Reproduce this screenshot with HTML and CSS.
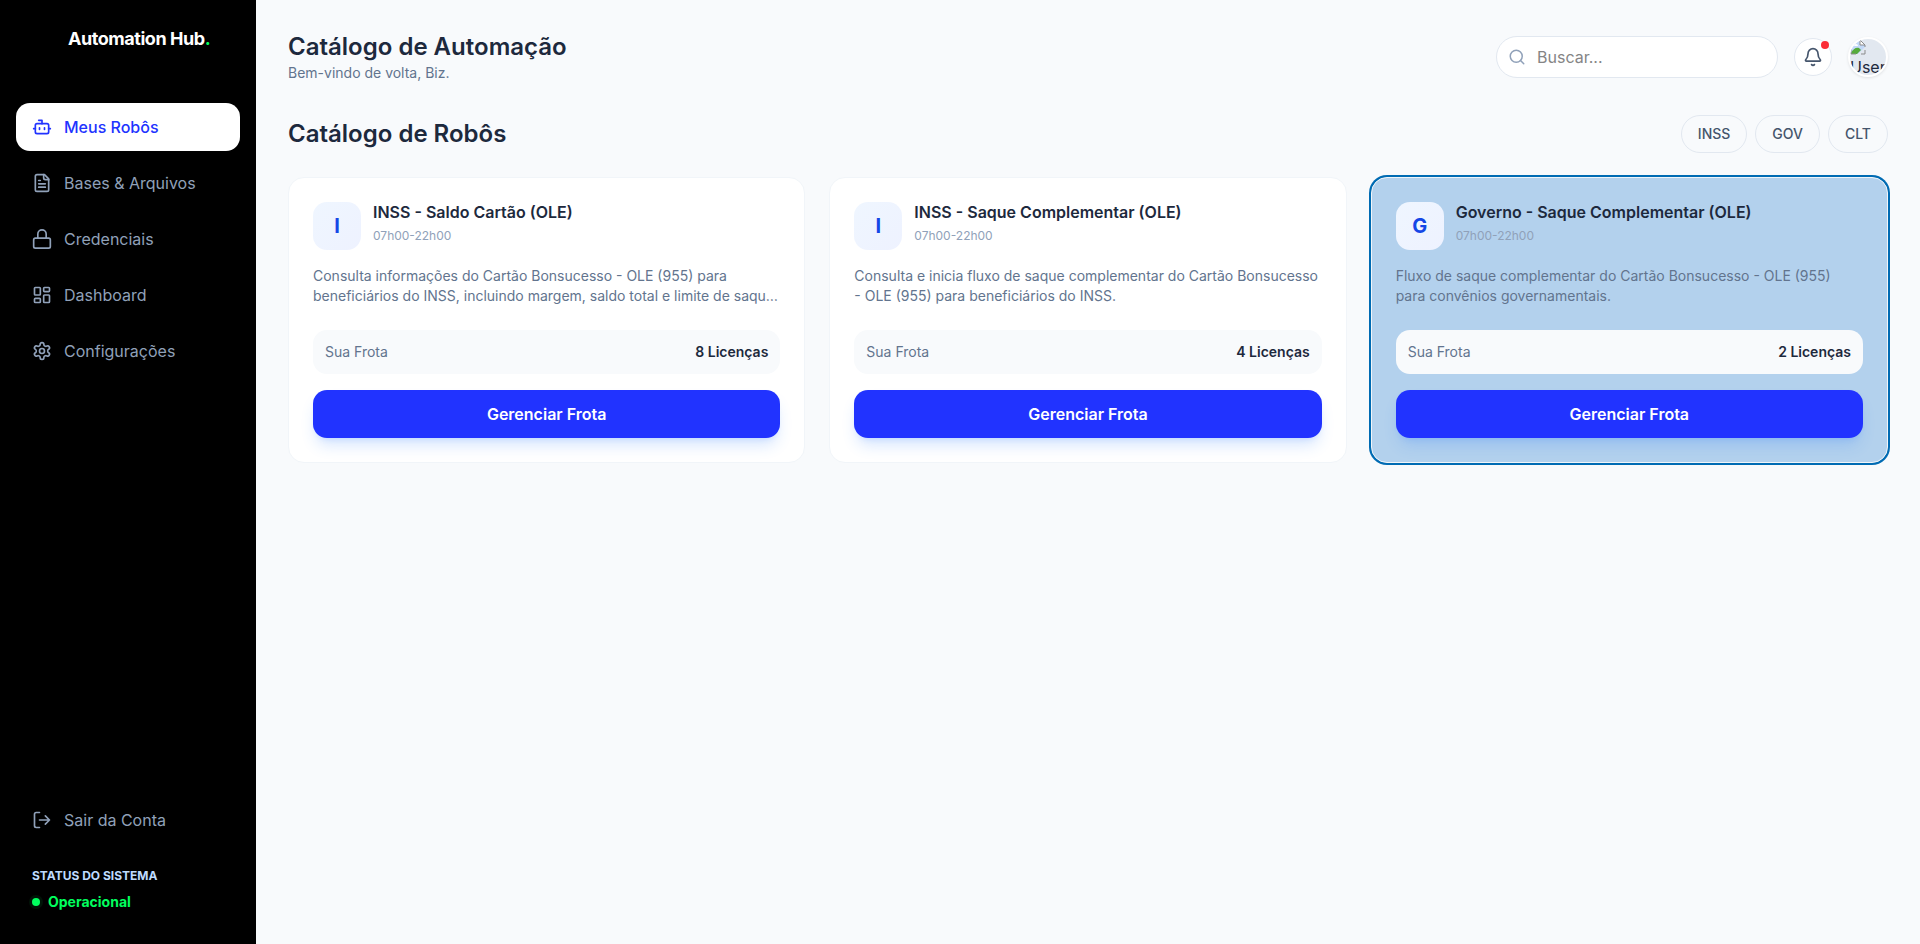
FILE: index.html
```html
<!DOCTYPE html>
<html lang="pt-BR">
<head>
  <meta charset="UTF-8" />
  <meta name="viewport" content="width=device-width, initial-scale=1" />
  <title>Automation Hub</title>
  <link rel="stylesheet" href="styles.css">
</head>
<body>

  <aside class="sidebar">
    <div class="logo">Automation Hub<span>.</span></div>

    <nav class="menu">
      <a href="#" class="menu-item active">
        <svg class="icon" viewBox="0 0 24 24"><path d="M12 8V4H8"/><rect width="16" height="12" x="4" y="8" rx="2"/><path d="M2 14h2M20 14h2M15 13v2M9 13v2"/></svg>
        Meus Robôs
      </a>
      <a href="#" class="menu-item">
        <svg class="icon" viewBox="0 0 24 24"><path d="M15 2H6a2 2 0 0 0-2 2v16a2 2 0 0 0 2 2h12a2 2 0 0 0 2-2V7Z"/><path d="M14 2v4a2 2 0 0 0 2 2h4M10 9H8M16 13H8M16 17H8"/></svg>
        Bases &amp; Arquivos
      </a>
      <a href="#" class="menu-item">
        <svg class="icon" viewBox="0 0 24 24"><rect width="20" height="12" x="2" y="11" rx="2"/><path d="M7 11V6a5 5 0 0 1 10 0v5"/></svg>
        Credenciais
      </a>
      <a href="#" class="menu-item">
        <svg class="icon" viewBox="0 0 24 24"><rect width="7" height="9" x="3" y="3" rx="1"/><rect width="7" height="5" x="14" y="3" rx="1"/><rect width="7" height="9" x="14" y="12" rx="1"/><rect width="7" height="5" x="3" y="16" rx="1"/></svg>
        Dashboard
      </a>
      <a href="#" class="menu-item">
        <svg class="icon" viewBox="0 0 24 24"><path d="M12.22 2h-.44a2 2 0 0 0-2 2v.18a2 2 0 0 1-1 1.73l-.43.25a2 2 0 0 1-2 0l-.15-.08a2 2 0 0 0-2.73.73l-.22.38a2 2 0 0 0 .73 2.73l.15.1a2 2 0 0 1 1 1.72v.51a2 2 0 0 1-1 1.74l-.15.09a2 2 0 0 0-.73 2.73l.22.38a2 2 0 0 0 2.73.73l.15-.08a2 2 0 0 1 2 0l.43.25a2 2 0 0 1 1 1.73V20a2 2 0 0 0 2 2h.44a2 2 0 0 0 2-2v-.18a2 2 0 0 1 1-1.73l.43-.25a2 2 0 0 1 2 0l.15.08a2 2 0 0 0 2.73-.73l.22-.39a2 2 0 0 0-.73-2.73l-.15-.08a2 2 0 0 1-1-1.74v-.5a2 2 0 0 1 1-1.74l.15-.09a2 2 0 0 0 .73-2.73l-.22-.38a2 2 0 0 0-2.73-.73l-.15.08a2 2 0 0 1-2 0l-.43-.25a2 2 0 0 1-1-1.73V4a2 2 0 0 0-2-2z"/><circle cx="12" cy="12" r="3"/></svg>
        Configurações
      </a>
    </nav>

    <div class="sidebar-footer">
      <a href="#" class="menu-item">
        <svg class="icon" viewBox="0 0 24 24"><path d="M9 21H5a2 2 0 0 1-2-2V5a2 2 0 0 1 2-2h4M16 17l5-5-5-5M21 12H9"/></svg>
        Sair da Conta
      </a>
      <div class="status">
        <div class="status-label">STATUS DO SISTEMA</div>
        <div class="status-value"><span class="status-dot"></span>Operacional</div>
      </div>
    </div>
  </aside>

  <main class="content">
    <header class="topbar">
      <div>
        <h1>Catálogo de Automação</h1>
        <p class="welcome">Bem-vindo de volta, Biz.</p>
      </div>
      <div class="actions">
        <div class="search">
          <svg class="icon search-icon" viewBox="0 0 24 24"><circle cx="11" cy="11" r="8"/><path d="m21 21-4.3-4.3"/></svg>
          <input type="text" placeholder="Buscar..." aria-label="Buscar" />
        </div>
        <button type="button" class="bell" aria-label="Notificações">
          <svg class="icon" viewBox="0 0 24 24"><path d="M10.268 21a2 2 0 0 0 3.464 0"/><path d="M3.262 15.326A1 1 0 0 0 4 17h16a1 1 0 0 0 .74-1.673C19.41 13.956 18 12.499 18 8A6 6 0 0 0 6 8c0 4.499-1.411 5.956-2.738 7.326"/></svg>
          <span class="bell-dot"></span>
        </button>
        <div class="avatar">
          <svg viewBox="0 0 16 16">
            <path fill="#c3d9f8" d="M1 1h9l5 5v2L8 15H1z"/>
            <path fill="#fff" d="M3 6a2 2 0 0 1 3-1 2 2 0 0 1 2 2H3z"/>
            <path fill="#55ab3c" d="M1 14c2-4 5-6 8-5l2 2-4 4H1z"/>
            <path fill="#fff" d="M10 1v5h5z"/>
            <path fill="none" stroke="#8b8b8b" d="M1 15V1h9l5 5v2M10 1v5h5M1 15h5M15 11v4h-4"/>
          </svg>
          <span>User</span>
        </div>
      </div>
    </header>

    <div class="section-head">
      <h2>Catálogo de Robôs</h2>
      <div class="filters">
        <button type="button">INSS</button>
        <button type="button">GOV</button>
        <button type="button">CLT</button>
      </div>
    </div>

    <div class="cards">
      <article class="card">
        <div class="card-head">
          <div class="card-letter">I</div>
          <div>
            <h3>INSS - Saldo Cartão (OLE)</h3>
            <p class="hours">07h00-22h00</p>
          </div>
        </div>
        <p class="desc">Consulta informações do Cartão Bonsucesso - OLE (955) para beneficiários do INSS, incluindo margem, saldo total e limite de saque disponível.</p>
        <div class="fleet"><span>Sua Frota</span><strong>8 Licenças</strong></div>
        <button type="button" class="manage">Gerenciar Frota</button>
      </article>

      <article class="card">
        <div class="card-head">
          <div class="card-letter">I</div>
          <div>
            <h3>INSS - Saque Complementar (OLE)</h3>
            <p class="hours">07h00-22h00</p>
          </div>
        </div>
        <p class="desc">Consulta e inicia fluxo de saque complementar do Cartão Bonsucesso - OLE (955) para beneficiários do INSS.</p>
        <div class="fleet"><span>Sua Frota</span><strong>4 Licenças</strong></div>
        <button type="button" class="manage">Gerenciar Frota</button>
      </article>

      <article class="card selected">
        <div class="card-head">
          <div class="card-letter">G</div>
          <div>
            <h3>Governo - Saque Complementar (OLE)</h3>
            <p class="hours">07h00-22h00</p>
          </div>
        </div>
        <p class="desc">Fluxo de saque complementar do Cartão Bonsucesso - OLE (955) para convênios governamentais.</p>
        <div class="fleet"><span>Sua Frota</span><strong>2 Licenças</strong></div>
        <button type="button" class="manage">Gerenciar Frota</button>
      </article>
    </div>
  </main>

</body>
</html>
```
FILE: styles.css
```css
* { box-sizing: border-box; }

body {
  margin: 0;
  display: flex;
  min-height: 100vh;
  font-family: Inter, 'Liberation Sans', sans-serif;
  font-size: 16px;
  line-height: 24px;
  color: #1d293d;
  background: #f8fafc;
}

h1, h2, h3, p { margin: 0; }

button, input { font-family: inherit; }

button { cursor: pointer; }

.icon {
  width: 20px;
  height: 20px;
  flex-shrink: 0;
  fill: none;
  stroke: currentColor;
  stroke-width: 2;
  stroke-linecap: round;
  stroke-linejoin: round;
}

/* Menu lateral */
.sidebar {
  width: 256px;
  flex-shrink: 0;
  display: flex;
  flex-direction: column;
  padding: 24px 16px 32px;
  background: #000;
}

.logo {
  padding-left: 52px;
  margin-bottom: 49px;
  font-size: 18px;
  line-height: 30px;
  font-weight: 700;
  letter-spacing: -0.025em;
  color: #fff;
}

.logo span { color: #00ff5e; }

.menu {
  display: flex;
  flex-direction: column;
  gap: 8px;
}

.menu-item {
  display: flex;
  align-items: center;
  gap: 12px;
  padding: 12px 16px;
  border-radius: 14px;
  color: #90a1b9;
  text-decoration: none;
}

.menu-item.active {
  background: #fff;
  color: #2133ff;
  font-weight: 500;
}

.sidebar-footer { margin-top: auto; }

.status { padding: 24px 16px 0; }

.status-label {
  margin-bottom: 8px;
  font-size: 12px;
  line-height: 16px;
  font-weight: 700;
  color: #bedbff;
}

.status-value {
  display: flex;
  align-items: center;
  gap: 8px;
  font-size: 14px;
  line-height: 20px;
  font-weight: 700;
  color: #00ff5e;
}

.status-dot {
  width: 8px;
  height: 8px;
  border-radius: 50%;
  background: #00ff5e;
  box-shadow: 0 0 0 3px rgba(0, 255, 94, 0.08);
}

/* Conteúdo */
.content {
  flex: 1;
  min-width: 0;
  padding: 31px 32px;
}

.topbar {
  display: flex;
  align-items: center;
  justify-content: space-between;
  margin-bottom: 32px;
}

h1, h2 {
  font-size: 24px;
  line-height: 32px;
  font-weight: 600;
}

.welcome {
  font-size: 14px;
  line-height: 20px;
  color: #62748e;
}

.actions {
  display: flex;
  align-items: center;
  gap: 16px;
}

.search { position: relative; }

.search-icon {
  position: absolute;
  left: 12px;
  top: 12px;
  width: 18px;
  height: 18px;
  color: #90a1b9;
}

.search input {
  display: block;
  width: 282px;
  height: 42px;
  padding: 8px 16px 8px 40px;
  border: 1px solid #e2e8f0;
  border-radius: 21px;
  background: #fff;
  font-size: 16px;
  color: #1d293d;
}

.search input::placeholder { color: #858585; }

.bell {
  position: relative;
  display: flex;
  padding: 8px;
  border: 1px solid #e2e8f0;
  border-radius: 50%;
  background: #fff;
  color: #45556c;
}

.bell-dot {
  position: absolute;
  top: 2px;
  right: 2px;
  width: 8px;
  height: 8px;
  border-radius: 50%;
  background: #fb2c36;
}

.avatar {
  width: 40px;
  height: 40px;
  overflow: hidden;
  border: 2px solid #fff;
  border-radius: 50%;
  background: #e2e8f0;
  box-shadow: 0 1px 3px rgba(0, 0, 0, 0.1);
}

.avatar svg {
  display: block;
  width: 16px;
  height: 16px;
}

.avatar span { display: block; }

.section-head {
  display: flex;
  align-items: center;
  justify-content: space-between;
  margin-bottom: 24px;
}

.filters {
  display: flex;
  gap: 8px;
}

.filters button {
  padding: 8px 16px;
  border: 1px solid #e2e8f0;
  border-radius: 19px;
  background: transparent;
  font-size: 14px;
  line-height: 20px;
  font-weight: 500;
  color: #45556c;
}

/* Cards dos robôs */
.cards {
  display: grid;
  grid-template-columns: repeat(3, 1fr);
  gap: 24px;
}

.card {
  padding: 24px;
  border: 1px solid #f1f5f9;
  border-radius: 16px;
  background: #fff;
}

.card.selected {
  background: #b3d1ed;
  box-shadow: 0 0 0 2px #006bb3;
}

.card-head {
  display: flex;
  gap: 12px;
  margin-bottom: 16px;
}

.card-letter {
  display: flex;
  align-items: center;
  justify-content: center;
  width: 48px;
  height: 48px;
  flex-shrink: 0;
  border-radius: 14px;
  background: linear-gradient(135deg, #eff6ff, #eef2ff);
  font-size: 20px;
  font-weight: 700;
  color: #1447e6;
}

h3 {
  font-size: 16px;
  line-height: 20px;
  font-weight: 600;
}

.hours {
  margin-top: 4px;
  font-size: 12px;
  line-height: 20px;
  color: #90a1b9;
}

.desc {
  display: -webkit-box;
  -webkit-box-orient: vertical;
  -webkit-line-clamp: 2;
  overflow: hidden;
  height: 40px;
  margin-bottom: 24px;
  font-size: 14px;
  line-height: 20px;
  color: #62748e;
}

.fleet {
  display: flex;
  align-items: center;
  justify-content: space-between;
  padding: 12px;
  margin-bottom: 16px;
  border-radius: 14px;
  background: #f8fafc;
  font-size: 14px;
  line-height: 20px;
  color: #62748e;
}

.fleet strong {
  font-weight: 600;
  color: #1d293d;
}

.manage {
  width: 100%;
  padding: 12px;
  border: none;
  border-radius: 14px;
  background: #2133ff;
  box-shadow: 0 10px 15px -3px rgba(43, 127, 255, 0.2), 0 4px 6px -4px rgba(43, 127, 255, 0.2);
  font-size: 16px;
  line-height: 24px;
  font-weight: 600;
  color: #fff;
}
```
